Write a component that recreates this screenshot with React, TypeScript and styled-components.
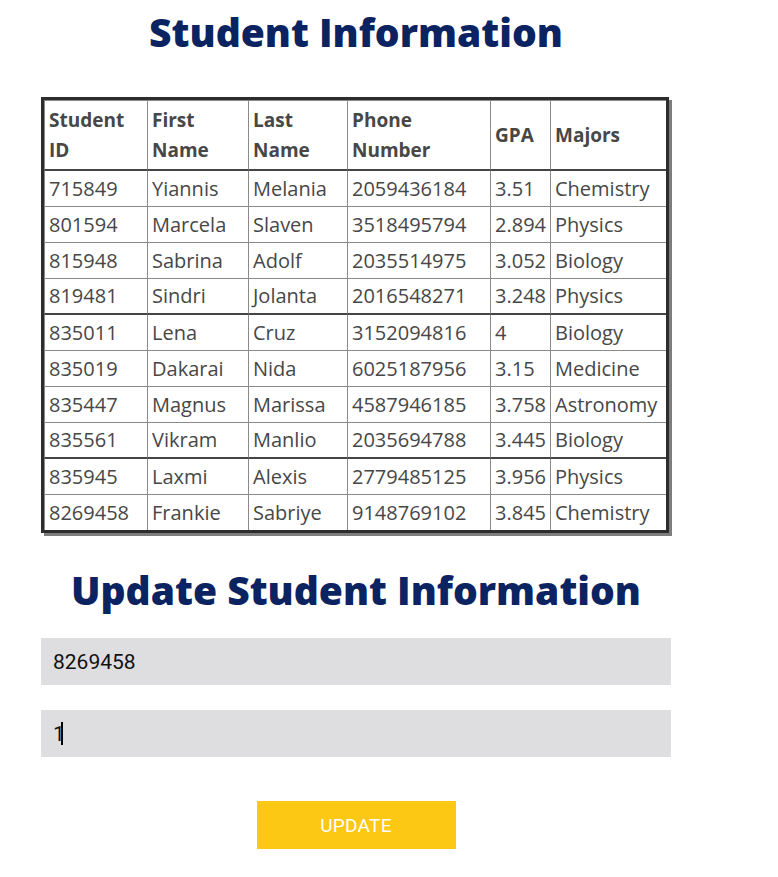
import React from "react";
import styled, { createGlobalStyle, css } from "styled-components";

const Global = createGlobalStyle`
  html, body { margin: 0; padding: 0; background: #fff; }
  body { font-family: "Open Sans", "DejaVu Sans", sans-serif; }
`;

const Page = styled.div`
  width: 630px;
  margin-left: 41px;
  padding-top: 2px;
  display: flex;
  flex-direction: column;
`;

const Title = styled.h1<{ $top?: number }>`
  margin: ${(p) => p.$top ?? 0}px 0 0;
  text-align: center;
  font-family: "Open Sans", sans-serif;
  font-weight: 800;
  font-size: 39px;
  line-height: 60px;
  color: #0c2361;
`;

const Table = styled.table`
  margin-top: 35px;
  width: 628px;
  border-collapse: separate;
  border-spacing: 0;
  table-layout: fixed;
  border: 3px solid #2d2d2d;
  box-shadow: 3px 3px 0 #7d7d7d;
  font-family: "Open Sans", sans-serif;
  font-size: 20px;
  color: #474747;
`;

const cellBase = css`
  border-right: 1px solid #8a8a8a;
  border-bottom: 1px solid #8a8a8a;
  padding: 0 0 0 4px;
  text-align: left;
  white-space: nowrap;
  overflow: hidden;
  &:first-child { border-left: 1px solid #8a8a8a; }
  &:last-child { border-right: none; }
`;

const Th = styled.th`
  ${cellBase}
  border-top: 1px solid #8a8a8a;
  border-bottom: 2px solid #444;
  font-weight: 700;
  font-size: 19px;
  line-height: 30px;
  height: 68px;
  white-space: normal;
  vertical-align: middle;
`;

const Td = styled.td`
  ${cellBase}
  height: 35px;
  line-height: 30px;
`;

const Tr = styled.tr<{ $strong?: boolean; $last?: boolean }>`
  ${(p) =>
    p.$strong &&
    css`
      td { border-bottom: 2px solid #444; height: 34px; }
    `}
  ${(p) =>
    p.$last &&
    css`
      td { border-bottom: none; }
    `}
`;

const Form = styled.form`
  display: flex;
  flex-direction: column;
  gap: 25px;
  margin-top: 18px;
`;

const Field = styled.div`
  position: relative;
  width: 630px;
  height: 47px;
`;

const Input = styled.input`
  box-sizing: border-box;
  width: 100%;
  height: 100%;
  border: none;
  outline: none;
  background: #dedee0;
  padding: 0 12px;
  font-family: "Roboto", "Liberation Sans", sans-serif;
  font-size: 21px;
  color: #111;
  caret-color: transparent;
`;

const Caret = styled.span<{ $left: number }>`
  position: absolute;
  left: ${(p) => p.$left}px;
  top: 12px;
  width: 2px;
  height: 23px;
  background: #000;
`;

const Button = styled.button`
  align-self: center;
  margin-top: 19px;
  width: 199px;
  height: 48px;
  border: none;
  background: #fcc813;
  color: #fff;
  font-family: "Roboto", "Liberation Sans", sans-serif;
  font-size: 19px;
  letter-spacing: 0.3px;
`;

const widths = [104, 101, 99, 143, 60, 115];

const rows: [string, string, string, string, string, string][] = [
  ["715849", "Yiannis", "Melania", "2059436184", "3.51", "Chemistry"],
  ["801594", "Marcela", "Slaven", "3518495794", "2.894", "Physics"],
  ["815948", "Sabrina", "Adolf", "2035514975", "3.052", "Biology"],
  ["819481", "Sindri", "Jolanta", "2016548271", "3.248", "Physics"],
  ["835011", "Lena", "Cruz", "3152094816", "4", "Biology"],
  ["835019", "Dakarai", "Nida", "6025187956", "3.15", "Medicine"],
  ["835447", "Magnus", "Marissa", "4587946185", "3.758", "Astronomy"],
  ["835561", "Vikram", "Manlio", "2035694788", "3.445", "Biology"],
  ["835945", "Laxmi", "Alexis", "2779485125", "3.956", "Physics"],
  ["8269458", "Frankie", "Sabriye", "9148769102", "3.845", "Chemistry"],
];

const headers = ["Student ID", "First Name", "Last Name", "Phone Number", "GPA", "Majors"];

export default function App() {
  return (
    <>
      <Global />
      <Page>
        <Title>Student Information</Title>
        <Table>
          <colgroup>
            {widths.map((w, i) => (
              <col key={i} style={{ width: w }} />
            ))}
          </colgroup>
          <thead>
            <tr>
              {headers.map((h) => (
                <Th key={h}>{h}</Th>
              ))}
            </tr>
          </thead>
          <tbody>
            {rows.map((r, i) => (
              <Tr key={r[0]} $strong={i === 3 || i === 7} $last={i === rows.length - 1}>
                {r.map((c, j) => (
                  <Td key={j}>{c}</Td>
                ))}
              </Tr>
            ))}
          </tbody>
        </Table>
        <Title $top={27}>Update Student Information</Title>
        <Form onSubmit={(e) => e.preventDefault()}>
          <Field>
            <Input defaultValue="8269458" />
          </Field>
          <Field>
            <Input defaultValue="1" />
            <Caret $left={20} />
          </Field>
          <Button type="submit">UPDATE</Button>
        </Form>
      </Page>
    </>
  );
}
